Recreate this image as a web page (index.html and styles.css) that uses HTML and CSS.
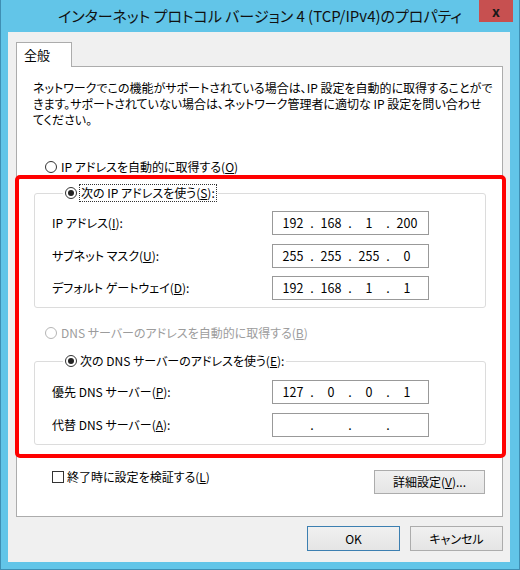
FILE: index.html
```html
<!DOCTYPE html>
<html lang="ja">
<head>
  <meta charset="UTF-8">
  <meta name="viewport" content="width=device-width, initial-scale=1.0">
  <title>インターネット プロトコル バージョン 4 (TCP/IPv4)のプロパティ</title>
  <link rel="stylesheet" href="styles.css">
</head>
<body>
  <div class="window">
    <!-- タイトルバー -->
    <div class="titlebar">
      <span class="title">インターネット プロトコル バージョン 4 (TCP/IPv4)のプロパティ</span>
      <button class="close-button">x</button>
    </div>

    <div class="client">
      <div class="tabs">
        <div class="tab">全般</div>
      </div>

      <div class="panel">
        <p class="description">ネットワークでこの機能がサポートされている場合は、IP 設定を自動的に取得することがで<br>きます。サポートされていない場合は、ネットワーク管理者に適切な IP 設定を問い合わせ<br>てください。</p>

        <div class="radio-row first-radio">
          <span class="radio"></span>
          <span>IP アドレスを自動的に取得する(<u>O</u>)</span>
        </div>

        <fieldset class="group group-ip">
          <legend>
            <span class="radio checked"></span>
            <span class="focus">次の IP アドレスを使う(<u>S</u>):</span>
          </legend>
          <div class="field">
            <span>IP アドレス(<u>I</u>):</span>
            <div class="ip"><span class="oct">192</span><span class="dot">.</span><span class="oct">168</span><span class="dot">.</span><span class="oct">1</span><span class="dot">.</span><span class="oct">200</span></div>
          </div>
          <div class="field">
            <span>サブネット マスク(<u>U</u>):</span>
            <div class="ip"><span class="oct">255</span><span class="dot">.</span><span class="oct">255</span><span class="dot">.</span><span class="oct">255</span><span class="dot">.</span><span class="oct">0</span></div>
          </div>
          <div class="field">
            <span>デフォルト ゲートウェイ(<u>D</u>):</span>
            <div class="ip"><span class="oct">192</span><span class="dot">.</span><span class="oct">168</span><span class="dot">.</span><span class="oct">1</span><span class="dot">.</span><span class="oct">1</span></div>
          </div>
        </fieldset>

        <div class="radio-row disabled dns-auto">
          <span class="radio"></span>
          <span>DNS サーバーのアドレスを自動的に取得する(<u>B</u>)</span>
        </div>

        <fieldset class="group group-dns">
          <legend>
            <span class="radio checked"></span>
            <span>次の DNS サーバーのアドレスを使う(<u>E</u>):</span>
          </legend>
          <div class="field">
            <span>優先 DNS サーバー(<u>P</u>):</span>
            <div class="ip"><span class="oct">127</span><span class="dot">.</span><span class="oct">0</span><span class="dot">.</span><span class="oct">0</span><span class="dot">.</span><span class="oct">1</span></div>
          </div>
          <div class="field">
            <span>代替 DNS サーバー(<u>A</u>):</span>
            <div class="ip"><span class="oct"></span><span class="dot">.</span><span class="oct"></span><span class="dot">.</span><span class="oct"></span><span class="dot">.</span><span class="oct"></span></div>
          </div>
        </fieldset>

        <div class="panel-footer">
          <div class="check-row">
            <span class="checkbox"></span>
            <span>終了時に設定を検証する(<u>L</u>)</span>
          </div>
          <button class="btn btn-advanced">詳細設定(<u>V</u>)...</button>
        </div>
      </div>

      <div class="dialog-buttons">
        <button class="btn btn-default">OK</button>
        <button class="btn">キャンセル</button>
      </div>
    </div>

    <!-- 強調用の赤枠 -->
    <div class="highlight"></div>
  </div>
</body>
</html>
```

FILE: styles.css
```css
* {
  box-sizing: border-box;
  margin: 0;
  padding: 0;
}

body {
  font-family: "Noto Sans CJK JP", "Noto Sans", sans-serif;
  font-size: 12px;
  font-feature-settings: "palt";
  color: #000;
  background-color: #fff;
}

button {
  font-family: inherit;
  font-size: inherit;
  font-feature-settings: inherit;
  color: inherit;
}

/* ウィンドウ枠 */
.window {
  position: relative;
  width: 520px;
  height: 570px;
  background-color: #62c5e8;
  border-left: 1px solid #3f8fb3;
  border-right: 1px solid #3f8fb3;
  border-bottom: 1px solid #3f8fb3;
}

.titlebar {
  position: relative;
  height: 32px;
  display: flex;
  align-items: center;
  justify-content: center;
  padding-bottom: 1px;
}

.title {
  font-size: 15px;
  color: #111;
}

.close-button {
  position: absolute;
  top: 0;
  right: 6px;
  width: 34px;
  height: 22px;
  border: none;
  background-color: #c75050;
  color: #1a1a1a;
  font-weight: bold;
  font-size: 14px;
  line-height: 18px;
}

.client {
  margin-left: 7px;
  width: 502px;
  height: 530px;
  background-color: #f0f0f0;
  padding: 10px 0 0 8px;
}

/* タブ */
.tabs {
  display: flex;
  height: 24px;
}

.tab {
  width: 56px;
  height: 25px;
  background-color: #fff;
  border: 1px solid #acacac;
  border-bottom: none;
  padding: 3px 0 0 7px;
  font-size: 13px;
  line-height: 18px;
  position: relative;
  z-index: 1;
}

.panel {
  width: 487px;
  height: 451px;
  background-color: #fff;
  border: 1px solid #acacac;
  padding: 13px 17px 0 16px;
  line-height: 16px;
}

.description {
  line-height: 16px;
  white-space: nowrap;
}

/* ラジオボタン */
.radio-row {
  display: flex;
  align-items: center;
  gap: 4px;
  height: 16px;
}

.first-radio {
  margin: 31px 0 0 12px;
}

.dns-auto {
  margin: 17px 0 0 12px;
}

.disabled {
  color: #9c9c9c;
}

.radio {
  display: inline-flex;
  align-items: center;
  justify-content: center;
  width: 12px;
  height: 12px;
  border: 1px solid #333;
  border-radius: 50%;
  background-color: #fff;
}

.disabled .radio {
  border-color: #b5b5b5;
}

.radio.checked::after {
  content: "";
  width: 6px;
  height: 6px;
  border-radius: 50%;
  background-color: #222;
}

/* グループボックス */
.group {
  border: 1px solid #dcdcdc;
  border-radius: 3px;
  margin: 10px 0 0 1px;
  width: 452px;
  padding: 10px 0 7px 17px;
  display: flex;
  flex-direction: column;
  gap: 8.5px;
}

.group-dns {
  margin-top: 12px;
  padding-top: 11px;
}

.group legend {
  display: flex;
  align-items: center;
  gap: 3px;
  height: 16px;
  margin-left: 11px;
  padding: 0 2px 0 2px;
}

.focus {
  outline: 1px dotted #333;
  outline-offset: 0;
  padding: 0 1px;
}

.field {
  display: grid;
  grid-template-columns: 220px 157px;
  align-items: center;
  height: 24px;
}

/* IPアドレス入力欄 */
.ip {
  display: flex;
  align-items: center;
  height: 24px;
  border: 1px solid #999;
  background-color: #fff;
  padding-left: 5px;
  font-size: 12.5px;
}

.oct {
  width: 30px;
  text-align: center;
}

.dot {
  width: 8px;
  text-align: center;
}

.panel-footer {
  display: flex;
  justify-content: space-between;
  align-items: flex-start;
  margin-top: 24px;
}

.check-row {
  display: flex;
  align-items: center;
  gap: 3px;
  height: 16px;
  margin-left: 19px;
}

.checkbox {
  width: 12px;
  height: 12px;
  border: 1px solid #333;
  background-color: #fff;
}

/* ボタン */
.btn {
  width: 93px;
  height: 25px;
  border: 1px solid #acacac;
  background: linear-gradient(#f0f0f0, #e5e5e5);
  text-align: center;
}

.btn-advanced {
  width: 111px;
  height: 24px;
  margin: 1px 0 0 0;
}

.btn-default {
  border-color: #3c7fb1;
}

.dialog-buttons {
  display: flex;
  justify-content: flex-end;
  gap: 10px;
  padding-right: 7px;
  margin-top: 9px;
}

/* 強調用の赤枠（注釈） */
.highlight {
  position: absolute;
  left: 14px;
  top: 175px;
  width: 491px;
  height: 283px;
  border: 4px solid #ff0000;
  border-radius: 5px;
  pointer-events: none;
}
```
